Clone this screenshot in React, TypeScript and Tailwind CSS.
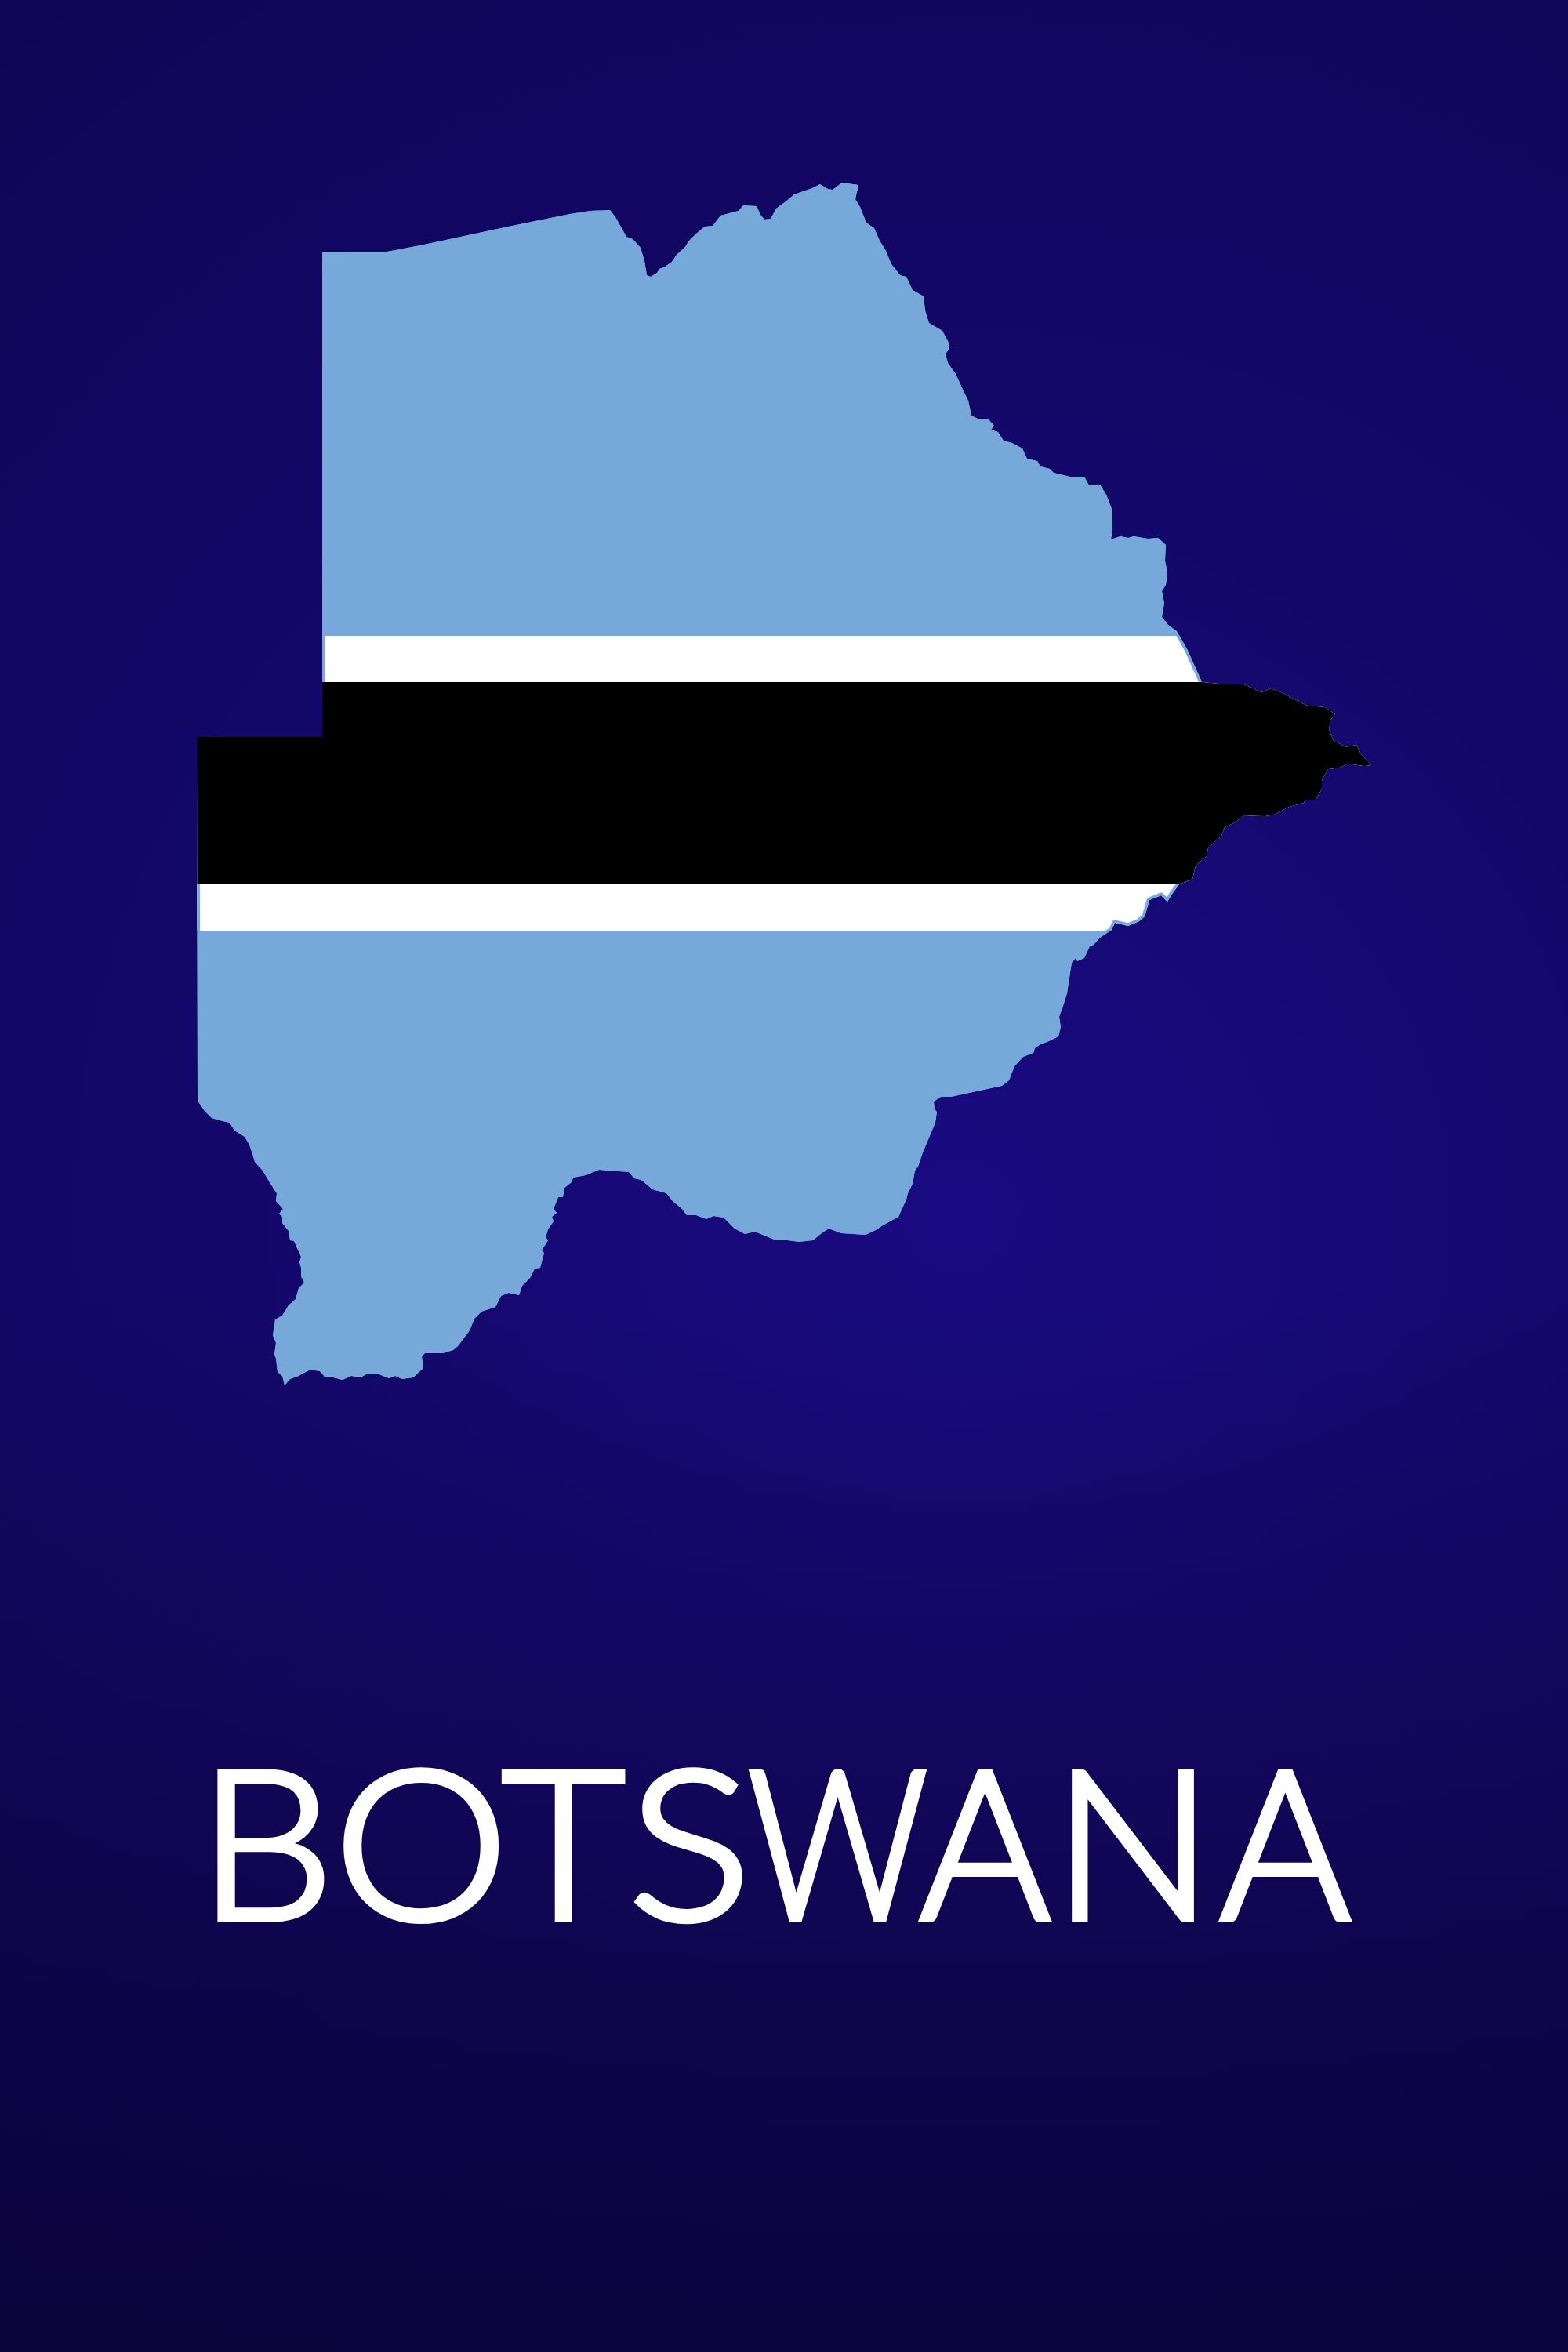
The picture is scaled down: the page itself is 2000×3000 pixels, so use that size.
const OUTLINE = `411,322 488,322 536,313 653,288 727,273 753,269 778,268 785,277 799,302 807,305 817,316 822,333 825,351 830,353 838,348 841,343 847,341 857,334 863,325 874,315 878,308 888,298 899,289 909,288 919,275 934,271 942,269 948,262 965,263 970,274 975,280 983,279 990,266 1001,258 1013,248 1036,240 1046,235 1056,241 1062,242 1074,233 1095,236 1091,254 1097,264 1105,284 1115,291 1122,307 1130,320 1137,337 1148,351 1156,353 1164,370 1178,378 1180,396 1185,412 1202,422 1211,439 1211,445 1206,451 1209,463 1219,477 1230,501 1235,511 1239,530 1247,534 1260,534 1268,543 1264,548 1273,551 1280,562 1291,565 1304,572 1310,585 1323,588 1327,595 1339,598 1344,603 1365,608 1383,608 1389,619 1403,618 1411,631 1418,649 1419,674 1417,688 1429,684 1439,686 1446,684 1464,687 1477,686 1487,695 1486,715 1489,731 1487,746 1482,754 1485,769 1482,787 1490,797 1501,805 1515,830 1523,848 1533,870 1564,873 1587,873 1609,883 1621,878 1636,884 1655,894 1667,900 1690,902 1703,911 1697,918 1695,931 1701,945 1717,953 1730,950 1736,962 1749,976 1740,977 1719,974 1709,979 1694,981 1686,995 1686,1006 1678,1020 1665,1020 1663,1024 1644,1029 1625,1039 1613,1041 1587,1040 1575,1049 1562,1055 1558,1066 1541,1081 1539,1092 1525,1104 1521,1121 1504,1128 1495,1140 1489,1150 1481,1142 1466,1148 1460,1169 1453,1175 1439,1181 1422,1177 1418,1186 1403,1196 1395,1205 1390,1207 1383,1222 1374,1226 1372,1222 1367,1228 1364,1247 1361,1267 1356,1283 1351,1297 1353,1310 1350,1322 1338,1328 1327,1332 1320,1337 1318,1343 1305,1348 1294,1360 1287,1378 1278,1385 1213,1399 1200,1399 1191,1405 1192,1415 1195,1418 1193,1432 1177,1470 1171,1488 1167,1493 1164,1510 1158,1522 1156,1530 1146,1552 1126,1563 1117,1569 1104,1575 1073,1573 1057,1567 1048,1573 1037,1582 1019,1584 1004,1582 990,1582 963,1571 950,1574 937,1567 923,1553 910,1551 901,1555 888,1550 876,1550 870,1542 858,1532 850,1522 832,1517 818,1505 809,1503 802,1495 777,1493 764,1492 747,1499 731,1502 729,1508 720,1515 718,1527 712,1527 706,1542 710,1547 704,1552 706,1558 699,1568 696,1578 699,1582 691,1595 694,1598 689,1617 682,1618 676,1630 666,1640 662,1652 649,1649 639,1653 632,1667 614,1673 605,1682 599,1697 584,1717 578,1722 565,1726 542,1726 538,1730 540,1745 527,1757 513,1759 504,1755 496,1758 481,1752 467,1753 460,1757 448,1755 437,1760 425,1757 414,1756 408,1749 396,1747 386,1752 381,1755 370,1759 363,1767 360,1755 354,1750 352,1733 350,1727 352,1713 348,1703 351,1683 360,1678 368,1665 377,1657 381,1643 388,1636 384,1628 384,1617 382,1610 384,1603 379,1592 375,1583 370,1582 368,1570 360,1560 360,1552 356,1548 361,1542 352,1532 353,1522 345,1510 335,1493 325,1482 322,1472 318,1460 312,1450 299,1442 293,1432 284,1430 270,1426 261,1417 252,1404 251,940 411,940`;

const BotswanaMap = () => (
  <svg viewBox="251 233 1499 1534" className="block w-[1499px] h-[1534px]">
    <defs>
      <clipPath id="country">
        <polygon points={OUTLINE} />
      </clipPath>
    </defs>
    <polygon points={OUTLINE} fill="#76a9da" />
    <g clipPath="url(#country)">
      <rect x="240" y="811" width="1520" height="376" fill="#ffffff" />
      {/* thin blue rim where the white bands meet the border */}
      <polygon points={OUTLINE} fill="none" stroke="#76a9da" strokeWidth="7" strokeLinejoin="round" />
      <rect x="240" y="870" width="1520" height="258" fill="#000000" />
    </g>
  </svg>
);

export default function App() {
  return (
    <div className="w-[2000px] h-[3000px] flex flex-col pt-[233px] pl-[251px] bg-[linear-gradient(180deg,rgba(10,3,50,0)_55%,rgba(10,3,50,0.75)_100%),radial-gradient(circle_at_1225px_1550px,#1a0b82_0%,#150870_35%,#0f0555_100%)]">
      <BotswanaMap />
      <h1 className="mt-[413px] ml-[2px] flex text-white font-['Lato','Liberation_Sans',sans-serif] font-light text-[265px] leading-[330px] whitespace-nowrap [-webkit-text-stroke:8px_white]">
        <span className="block w-[173px] origin-left scale-x-[1.03]">B</span>
        <span className="block w-[214px] origin-left scale-x-[1.06]">O</span>
        <span className="block w-[161px] origin-left scale-x-[1.025]">T</span>
        <span className="block w-[153px] origin-left scale-x-[1.11]">S</span>
        <span className="block w-[219px] origin-left scale-x-[0.85]">W</span>
        <span className="block w-[170px] origin-left scale-x-[0.96]">A</span>
        <span className="block w-[213px] origin-left scale-x-[1.02]">N</span>
        <span className="block origin-left scale-x-[0.96]">A</span>
      </h1>
    </div>
  );
}
